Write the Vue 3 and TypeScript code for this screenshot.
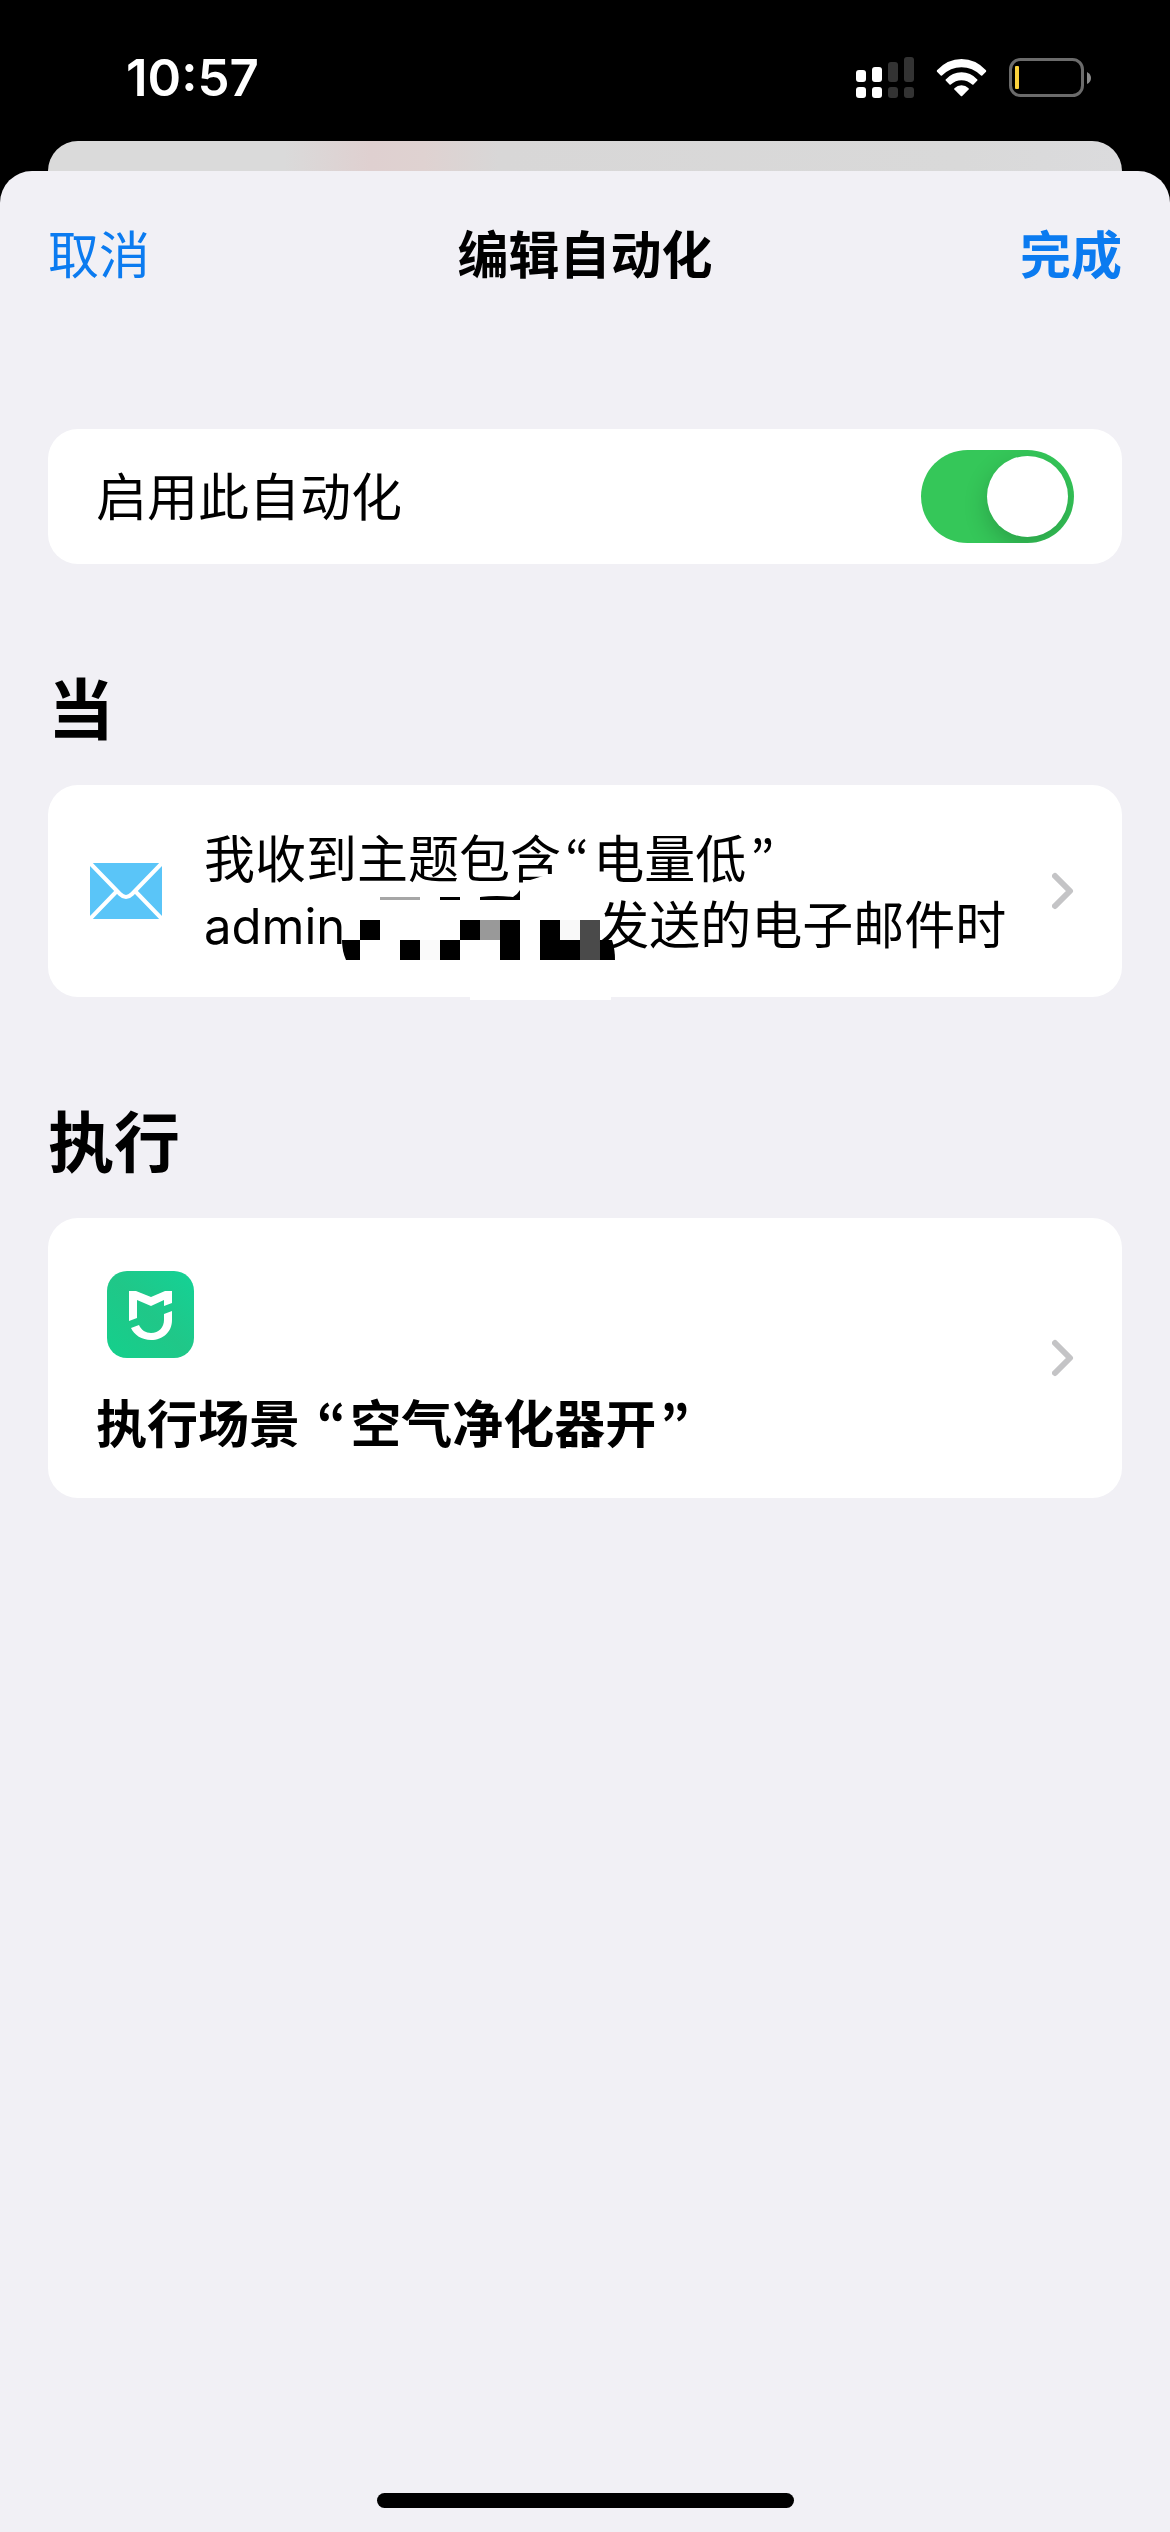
<script setup lang="ts">
import { ref } from 'vue'

interface Block {
  x: number
  y: number
  w: number
  h: number
  fill: string
}

const enabled = ref<boolean>(true)

const signalBars: number[] = [12, 15, 20, 25]

const mosaic: Block[] = [
  { x: 39, y: 6, w: 40, h: 3, fill: '#a6a6a6' },
  { x: 99, y: 6, w: 20, h: 3, fill: '#000' },
  { x: 19, y: 29, w: 20, h: 20, fill: '#000' },
  { x: 119, y: 29, w: 20, h: 20, fill: '#000' },
  { x: 139, y: 29, w: 20, h: 20, fill: '#999' },
  { x: 159, y: 29, w: 20, h: 40, fill: '#000' },
  { x: 199, y: 29, w: 20, h: 40, fill: '#000' },
  { x: 219, y: 29, w: 20, h: 20, fill: '#f9f9f9' },
  { x: 239, y: 29, w: 20, h: 40, fill: '#4a4a4a' },
  { x: 59, y: 49, w: 20, h: 20, fill: '#000' },
  { x: 79, y: 49, w: 20, h: 20, fill: '#fafafa' },
  { x: 99, y: 49, w: 20, h: 20, fill: '#000' },
  { x: 219, y: 49, w: 20, h: 20, fill: '#000' },
]
</script>

<template>
  <div class="screen">
    <header class="status">
      <time class="clock">10:57</time>
      <div class="status-icons">
        <svg width="58" height="42" viewBox="0 0 58 42" aria-hidden="true">
          <g v-for="(h, i) in signalBars" :key="i" :fill="i < 2 ? '#fff' : '#333'">
            <rect :x="i * 16" :y="25 - h" width="10" :height="h" rx="3" />
            <rect :x="i * 16" y="30" width="10" height="11" rx="3" />
          </g>
        </svg>
        <svg width="51" height="38" viewBox="0 0 51 38" fill="#fff" aria-hidden="true">
          <path d="M1 11.2Q11.500 0 25.500 0T50 11.200Q50.500 12 50 12.700L46.300 16.600Q45.600 17 45 16.400Q36.500 8.200 25.500 8.200T6 16.400Q5.400 17 4.700 16.600L1 12.700Q.5 12 1 11.200Z" />
          <path d="M9.700 20.400Q16.500 13.300 25.500 13.300T41.300 20.400Q41.800 21 41.300 21.600L37.500 25.500Q36.800 26 36.200 25.500Q31.500 21.200 25.500 21.200T14.800 25.500Q14.200 26 13.500 25.500L9.700 21.600Q9.200 21 9.700 20.400Z" />
          <path d="M18.400 29.200Q21.500 26.200 25.500 26.200T32.600 29.200Q33 29.900 32.600 30.500L26.200 37Q25.500 37.600 24.800 37L18.400 30.500Q18 29.900 18.400 29.200Z" />
        </svg>
        <svg width="83" height="40" viewBox="0 0 83 40" aria-hidden="true">
          <rect x="1.500" y="1.500" width="72" height="36" rx="10" fill="none" stroke="#6b6b6b" stroke-width="3" />
          <path d="M78 14Q82 16 82 20T78 26Z" fill="#8a8a8a" />
          <rect x="6" y="8" width="4" height="23" rx="1" fill="#fbd23c" />
        </svg>
      </div>
    </header>

    <div class="back-sheet"></div>

    <main class="sheet">
      <nav class="bar">
        <button type="button" class="action">取消</button>
        <h1 class="title">编辑自动化</h1>
        <button type="button" class="action done">完成</button>
      </nav>

      <div class="content">
        <div class="card toggle-card">
          <label for="enabled">启用此自动化</label>
          <input id="enabled" v-model="enabled" class="switch" type="checkbox" role="switch" />
        </div>

        <h2 class="heading">当</h2>
        <button type="button" class="card when-card">
          <svg class="icon" width="72" height="56" viewBox="0 0 72 56" aria-hidden="true">
            <rect width="72" height="56" rx="4" fill="#5ac5f8" />
            <path d="M0 0L30 31Q36 37 42 31L72 0M0 56L27 28M72 56L45 28" fill="none" stroke="#fff" stroke-width="4" />
          </svg>
          <span class="message">
            <span class="line">我收到主题包含<span class="quote">“</span>电量低<span class="quote">”</span></span>
            <span class="line">
              <span class="sender">admin</span>
              <svg class="mosaic" width="253" height="66" viewBox="4 2 253 66" aria-hidden="true">
                <path d="M186 -10L202 -15L203 -17H222V-5H186Z" fill="#fff" />
                <path d="M129 100H270V109H129Z" fill="#fff" />
                <rect v-for="(b, i) in mosaic" :key="i" :x="b.x" :y="b.y" :width="b.w" :height="b.h" :fill="b.fill" />
                <path d="M139 6Q156 4 172 6Q176 4 179 -1V9H139Z" />
                <path d="M1 49H19V69H5Q1 60 1 49Z" />
                <path d="M259 49H271Q274 58 274 69H259Z" />
              </svg>
              <span>发送的电子邮件时</span>
            </span>
          </span>
          <svg class="chevron" width="22" height="38" viewBox="0 0 22 38" aria-hidden="true">
            <path d="M3 4L18 19L3 34" />
          </svg>
        </button>

        <h2 class="heading">执行</h2>
        <button type="button" class="card do-card">
          <span class="scene">
            <svg width="105" height="105" viewBox="0 0 105 105" aria-hidden="true">
              <defs>
                <linearGradient id="mi" x1="0" y1="1" x2="1" y2="0">
                  <stop offset="0" stop-color="#14d08c" />
                  <stop offset="0.5" stop-color="#20c788" />
                  <stop offset="1" stop-color="#14d296" />
                </linearGradient>
              </defs>
              <rect x="11" y="9" width="87" height="87" rx="20" fill="url(#mi)" />
              <path d="M33 29H40L55 35L69 29H76V41L68 44V38L55 44L41 38V56L33 59Z" fill="#fff" />
              <path d="M76 49V58C76 70 67 78 55 78C46 78 38 73 35 66L43 63C45 68 50 71 55 71C63 71 68 65 68 58V52Z" fill="#fff" />
            </svg>
            <span class="scene-name">执行场景 <span class="quote">“</span>空气净化器开<span class="quote">”</span></span>
          </span>
          <svg class="chevron" width="22" height="38" viewBox="0 0 22 38" aria-hidden="true">
            <path d="M3 4L18 19L3 34" />
          </svg>
        </button>
      </div>

      <div class="home-indicator"></div>
    </main>
  </div>
</template>

<style>
body {
  margin: 0;
  background: #000;
}
</style>

<style scoped>
.screen {
  display: flex;
  flex-direction: column;
  min-height: 100vh;
  background: #000;
  color: #000;
  font-family: Inter, "Noto Sans CJK SC", sans-serif;
  font-size: 51px;
  line-height: 66px;
}

button {
  padding: 0;
  border: 0;
  background: none;
  color: inherit;
  font: inherit;
  text-align: left;
}

.status {
  display: flex;
  align-items: center;
  justify-content: space-between;
  box-sizing: border-box;
  height: 141px;
  padding: 15px 78px 0 126px;
  color: #fff;
}

.clock {
  font-weight: 600;
}

.status-icons {
  display: flex;
  align-items: center;
  gap: 22px;
}

.back-sheet {
  height: 30px;
  margin: 0 48px;
  border-radius: 30px 30px 0 0;
  background: linear-gradient(90deg, #dadada 22%, #dfd0d0 30%, #dfd2d1 35%, #d8d7d7 42%, #d9d9d9 85%, #dbdbdd);
}

.sheet {
  display: flex;
  flex: 1;
  flex-direction: column;
  border-radius: 32px 32px 0 0;
  background: #f1f0f5;
}

.bar {
  display: grid;
  grid-template-columns: 1fr auto 1fr;
  align-items: center;
  box-sizing: border-box;
  height: 168px;
  padding: 2px 48px 0;
}

.bar .action {
  color: #0b7bf0;
}

.bar .done {
  justify-self: end;
  font-weight: 600;
}

.title {
  margin: 0;
  font-size: 51px;
  font-weight: 600;
}

.content {
  display: flex;
  flex-direction: column;
  padding: 90px 48px 0;
}

.content .card {
  display: flex;
  align-items: center;
  border-radius: 30px;
  background: #fff;
}

.content .toggle-card {
  justify-content: space-between;
  padding: 21px 48px;
}

.toggle-card label {
  padding-top: 2px;
}

.switch {
  appearance: none;
  box-sizing: border-box;
  width: 153px;
  height: 93px;
  margin: 0;
  padding: 6px;
  border-radius: 47px;
  background: #d9d9de;
  overflow: hidden;
}

.switch::before {
  content: "";
  display: block;
  width: 81px;
  height: 81px;
  border-radius: 50%;
  background: #fff;
  box-shadow: 0 9px 24px rgba(0, 0, 0, 0.2);
}

.switch:checked {
  background: #35c759;
}

.switch:checked::before {
  margin-left: auto;
}

.heading {
  margin: 105px 0 34px;
  font-size: 66px;
  font-weight: 600;
  line-height: 82px;
}

.content .when-card {
  gap: 42px;
  padding: 38px 48px 38px 42px;
}

.icon,
.chevron {
  flex: none;
}

.message {
  display: flex;
  flex: 1;
  flex-direction: column;
  padding-top: 4px;
}

.line {
  display: flex;
  align-items: baseline;
  height: 66px;
  white-space: nowrap;
}

.sender {
  font-size: 49px;
}

.quote {
  padding: 0 4px;
  font-family: "Noto Sans CJK KR", sans-serif;
  line-height: 1;
}

.mosaic {
  flex: none;
  align-self: flex-start;
  overflow: visible;
}

.chevron {
  margin-left: auto;
  fill: none;
  stroke: #c4c4c6;
  stroke-width: 6px;
  stroke-linecap: round;
  stroke-linejoin: round;
}

.content .do-card {
  padding: 40px 48px;
}

.scene {
  display: flex;
  flex-direction: column;
  gap: 25px;
  padding-top: 4px;
}

.scene-name {
  font-weight: 600;
}

.home-indicator {
  width: 417px;
  height: 15px;
  margin: auto auto 24px;
  border-radius: 8px;
  background: #000;
}
</style>
